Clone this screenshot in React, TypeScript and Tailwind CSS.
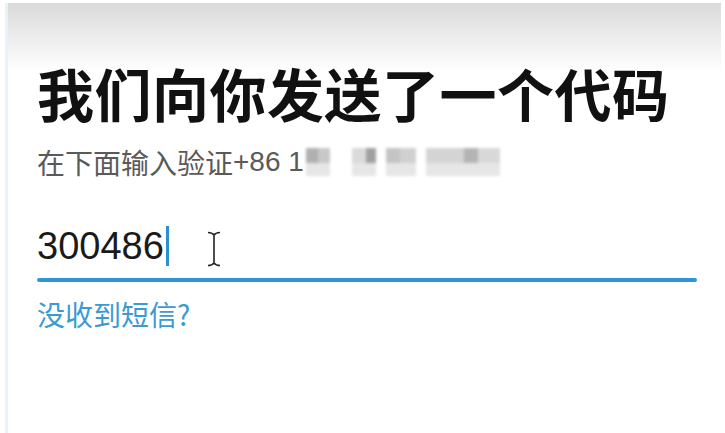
const CJK = '"Noto Sans CJK SC", "Noto Sans", sans-serif';

// blurred phone-number blocks after "+86 1"
const blocks = [
  { w: 'w-[12px]', c: 'bg-[#b0b0b0]' },
  { w: 'w-[12px]', c: 'bg-[#c8c8c8]' },
  { w: 'w-[22px]', c: 'bg-transparent' },
  { w: 'w-[14px]', c: 'bg-[#dadada]' },
  { w: 'w-[10px]', c: 'bg-[#a0a0a0]' },
  { w: 'w-[10px]', c: 'bg-transparent' },
  { w: 'w-[14px]', c: 'bg-[#c4c4c4]' },
  { w: 'w-[16px]', c: 'bg-[#d0d0d0]' },
  { w: 'w-[10px]', c: 'bg-transparent' },
  { w: 'w-[38px]', c: 'bg-[#d4d4d4]' },
  { w: 'w-[14px]', c: 'bg-[#b4b4b4]' },
  { w: 'w-[22px]', c: 'bg-[#d8d8d8]' },
];

export default function App() {
  return (
    <div
      className="w-[725px] h-[433px] overflow-hidden bg-white pl-[5px] pr-[4px]"
      style={{ fontFamily: CJK }}
    >
      <div className="h-full border-t-[3px] border-white">
        <div className="h-full border-l-[3px] border-[#e3f5f8] bg-gradient-to-b from-[#dadada] via-white via-[16%] to-white pl-[29px] pt-[57px]">
          {/* Heading */}
          <h1 className="text-[57px] font-bold leading-[64px] text-[#111] tracking-[0.5px]">
            我们向你发送了一个代码
          </h1>

          {/* Sub line */}
          <div className="mt-[20px] flex items-center text-[28px] leading-[36px] text-[#5a5a5a]">
            <span>在下面输入验证</span>
            <span style={{ fontFamily: '"Liberation Sans", sans-serif' }}>+86 1</span>
            <div className="ml-[2px] flex h-[28px] flex-col blur-[1.5px]">
              <div className="flex h-[15px]">
                {blocks.map((b, i) => (
                  <div key={i} className={`${b.w} ${b.c}`} />
                ))}
              </div>
              <div className="flex h-[13px]">
                {blocks.map((b, i) => (
                  <div key={i} className={`${b.w} ${b.c === 'bg-transparent' ? 'bg-transparent' : 'bg-[#e6e6e6]'}`} />
                ))}
              </div>
            </div>
          </div>

          {/* Code input */}
          <div className="mt-[44px] w-[660px]">
            <div className="flex h-[44px] items-center">
              <span
                className="text-[38px] leading-[44px] text-[#1a1a1a]"
                style={{ fontFamily: '"Liberation Sans", sans-serif' }}
              >
                300486
              </span>
              <span className="ml-[2px] h-[40px] w-[3px] bg-[#2c8fd0]" />
              <svg className="ml-[38px] mt-[6px]" width="14" height="36" viewBox="0 0 14 36">
                <path
                  d="M1 1.5 Q5 1.5 7 4 Q9 1.5 13 1.5 M7 4 V32 M1 34.5 Q5 34.5 7 32 Q9 34.5 13 34.5"
                  fill="none"
                  stroke="#222"
                  strokeWidth="1.6"
                />
              </svg>
            </div>
            <div className="mt-[10px] h-[4px] rounded-full bg-[#2f95d4]" />
          </div>

          {/* Link */}
          <div className="mt-[14px] text-[28px] leading-[36px] text-[#3b9ad2]">没收到短信?</div>
        </div>
      </div>
    </div>
  );
}
